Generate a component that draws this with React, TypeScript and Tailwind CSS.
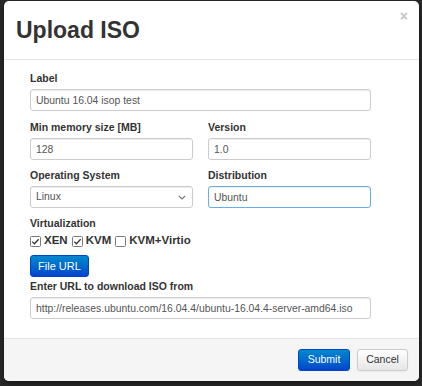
import React from 'react';

const inputCls =
  'block h-[22px] w-full rounded-[3px] border border-[#ccc] bg-white pl-[5px] text-[10.4px] text-[#555] shadow-[inset_0_1px_1px_rgba(0,0,0,0.075)] outline-none';

const labelCls = 'block h-4 leading-4 mb-[3px] text-[10.5px] font-bold text-[#333]';

const Check = ({ checked }: { checked: boolean }) => (
  <svg width="11" height="11" viewBox="0 0 11 11" className="shrink-0">
    <rect x="0.5" y="0.5" width="10" height="10" rx="1" fill="#fff" stroke="#7a7a7a" />
    {checked && <path d="M2.3 5.6 L4.4 7.7 L8.7 3.2" fill="none" stroke="#333" strokeWidth="1.3" />}
  </svg>
);

const VIRT = [
  { name: 'XEN', on: true },
  { name: 'KVM', on: true },
  { name: 'KVM+Virtio', on: false },
];

const App = () => {
  return (
    <div className="w-[422px] h-[386px] bg-[#2a2a2a] pt-px pl-1 font-['Liberation_Sans',Arial,sans-serif]">
      <div className="w-[415px] h-[380px] bg-white rounded-[5px] flex flex-col overflow-hidden shadow-[0_3px_9px_rgba(0,0,0,0.5)]">
        <div className="relative h-[59px] shrink-0 border-b border-[#e5e5e5] flex items-center pl-3">
          <h3 className="text-[23px] font-bold text-[#333] leading-none">Upload ISO</h3>
          <span className="absolute right-[11px] top-[8px] text-[14px] font-bold text-[#c4c4c4] leading-none">×</span>
        </div>

        <div className="flex-1 pl-[26px] pt-[10px]">
          <div className="w-[341px]">
            <div className="mb-[8px]">
              <label className={labelCls}>Label</label>
              <input className={inputCls} defaultValue="Ubuntu 16.04 isop test" />
            </div>

            <div className="grid grid-cols-2 gap-x-[15px] mb-[7px]">
              <div>
                <label className={labelCls}>Min memory size [MB]</label>
                <input className={inputCls} defaultValue="128" />
              </div>
              <div>
                <label className={labelCls}>Version</label>
                <input className={inputCls} defaultValue="1.0" />
              </div>
            </div>

            <div className="grid grid-cols-2 gap-x-[15px] mb-[7px]">
              <div>
                <label className={labelCls}>Operating System</label>
                <div className={`${inputCls} flex items-center justify-between pr-[6px]`}>
                  <span>Linux</span>
                  <svg width="8" height="5" viewBox="0 0 8 5">
                    <path d="M0.8 0.8 L4 4 L7.2 0.8" fill="none" stroke="#777" strokeWidth="1.2" />
                  </svg>
                </div>
              </div>
              <div>
                <label className={labelCls}>Distribution</label>
                <input
                  className={`${inputCls} !border-[#66afe9] shadow-[inset_0_1px_1px_rgba(0,0,0,0.075),0_0_4px_rgba(102,175,233,0.7)]`}
                  defaultValue="Ubuntu"
                />
              </div>
            </div>

            <label className="block h-4 leading-4 text-[10.5px] font-bold text-[#333]">Virtualization</label>
            <div className="mt-[2px] h-4 flex items-center text-[11.5px] font-bold text-[#333]">
              {VIRT.map((v) => (
                <div key={v.name} className="flex items-center mr-[4px]">
                  <Check checked={v.on} />
                  <span className="ml-[3px]">{v.name}</span>
                </div>
              ))}
            </div>

            <button className="block mt-[6px] h-[22px] w-[59px] rounded-[3px] border border-[#0044cc] bg-gradient-to-b from-[#0088cc] to-[#0044cc] text-[11px] text-white">
              File URL
            </button>

            <label className="block mt-[1px] h-4 leading-4 mb-[3px] text-[10.5px] font-bold text-[#333]">
              Enter URL to download ISO from
            </label>
            <input className={inputCls} defaultValue="http://releases.ubuntu.com/16.04.4/ubuntu-16.04.4-server-amd64.iso" />
          </div>
        </div>

        <div className="h-[43px] shrink-0 border-t border-[#e5e5e5] bg-[#f5f5f5] flex items-center justify-end pr-[11px] gap-[7px]">
          <button className="h-[22px] w-[52px] rounded-[3px] border border-[#0044cc] bg-gradient-to-b from-[#0088cc] to-[#0044cc] text-[10.5px] text-white">
            Submit
          </button>
          <button className="h-[22px] w-[51px] rounded-[3px] border border-[#ccc] bg-gradient-to-b from-white to-[#e6e6e6] text-[10.5px] text-[#333] shadow-[0_1px_2px_rgba(0,0,0,0.05)]">
            Cancel
          </button>
        </div>
      </div>
    </div>
  );
};

export default App;
